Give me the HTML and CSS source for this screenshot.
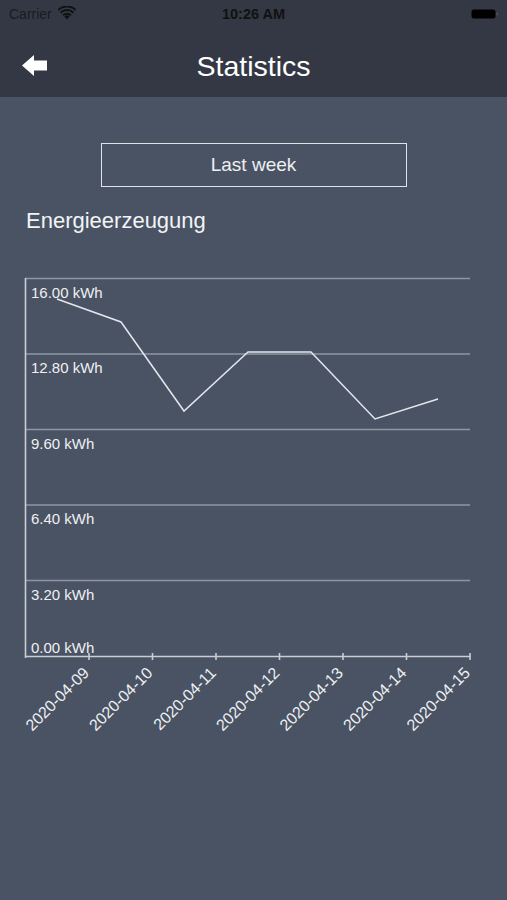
FILE: index.html
```html
<!DOCTYPE html>
<html lang="de">
<head>
<meta charset="utf-8">
<title>Statistics</title>
<link rel="stylesheet" href="styles.css">
</head>
<body>
<header class="top">
  <div class="status">
    <div class="status-left">
      <span class="carrier">Carrier</span>
      <svg class="wifi" width="18" height="14" viewBox="0 0 18 14">
        <path d="M9 13.5 L6.3 10.6 A3.9 3.9 0 0 1 11.7 10.6 Z" fill="#111"/>
        <path d="M4.4 8.6 A6.6 6.6 0 0 1 13.6 8.6 L12.3 10 A4.7 4.7 0 0 0 5.7 10 Z" fill="#111"/>
        <path d="M1.9 6 A10.2 10.2 0 0 1 16.1 6 L14.8 7.4 A8.3 8.3 0 0 0 3.2 7.4 Z" fill="#111"/>
        <path d="M-0.5 3.4 A13.8 13.8 0 0 1 18.5 3.4 L17.2 4.8 A11.9 11.9 0 0 0 0.8 4.8 Z" fill="#111"/>
      </svg>
    </div>
    <div class="time">10:26 AM</div>
    <div class="status-right">
      <svg class="battery" width="28" height="12" viewBox="0 0 28 12">
        <rect x="0.5" y="1.5" width="24" height="9" rx="2.5" fill="#000"/>
        <rect x="25.5" y="4.5" width="1.5" height="3" rx="0.7" fill="#555"/>
      </svg>
    </div>
  </div>
  <nav class="navbar">
    <svg class="back" width="26" height="22" viewBox="0 0 26 22">
      <path d="M0 10.5 L12 0 L12 5.5 L25 5.5 L25 15.5 L12 15.5 L12 21 Z" fill="#fff"/>
    </svg>
    <h1 class="title">Statistics</h1>
  </nav>
</header>
<main class="content">
  <div class="btn-row"><button class="period">Last week</button></div>
  <h2 class="section">Energieerzeugung</h2>
  <svg class="chart" width="507" height="500" viewBox="0 260 507 500">
    <g class="grid">
      <line x1="25" y1="277.5" x2="470" y2="277.5"/>
      <line x1="25" y1="353" x2="470" y2="353"/>
      <line x1="25" y1="428.5" x2="470" y2="428.5"/>
      <line x1="25" y1="504" x2="470" y2="504"/>
      <line x1="25" y1="579.5" x2="470" y2="579.5"/>
    </g>
    <g class="axis">
      <line x1="25.5" y1="277" x2="25.5" y2="657"/>
      <line x1="25" y1="655.5" x2="470.5" y2="655.5"/>
      <line x1="89" y1="652" x2="89" y2="659"/>
      <line x1="152.5" y1="652" x2="152.5" y2="659"/>
      <line x1="216" y1="652" x2="216" y2="659"/>
      <line x1="279.5" y1="652" x2="279.5" y2="659"/>
      <line x1="343" y1="652" x2="343" y2="659"/>
      <line x1="406.5" y1="652" x2="406.5" y2="659"/>
      <line x1="470" y1="652" x2="470" y2="659"/>
    </g>
    <polyline class="data" points="57,298 121,321 184,410 248,351 311,351 375,418 438,398"/>
    <g class="ylabels">
      <text x="31" y="297">16.00 kWh</text>
      <text x="31" y="372">12.80 kWh</text>
      <text x="31" y="448">9.60 kWh</text>
      <text x="31" y="523">6.40 kWh</text>
      <text x="31" y="599">3.20 kWh</text>
      <text x="31" y="652">0.00 kWh</text>
    </g>
    <g class="xlabels">
      <text transform="translate(90 673) rotate(-45)">2020-04-09</text>
      <text transform="translate(153.5 673) rotate(-45)">2020-04-10</text>
      <text transform="translate(217 673) rotate(-45)">2020-04-11</text>
      <text transform="translate(280.5 673) rotate(-45)">2020-04-12</text>
      <text transform="translate(344 673) rotate(-45)">2020-04-13</text>
      <text transform="translate(407.5 673) rotate(-45)">2020-04-14</text>
      <text transform="translate(471 673) rotate(-45)">2020-04-15</text>
    </g>
  </svg>
</main>
</body>
</html>
```
FILE: styles.css
```css
html, body {
  margin: 0;
  padding: 0;
}
body {
  background: #4a5363;
  font-family: "Liberation Sans", Arial, sans-serif;
  color: #f2f4f7;
  width: 507px;
  height: 900px;
  overflow: hidden;
}
.top {
  background: #333844;
  height: 97px;
  display: flex;
  flex-direction: column;
}
.status {
  height: 27px;
  display: flex;
  align-items: center;
  justify-content: space-between;
  padding: 0 8px 0 9px;
  color: #111;
  font-size: 14px;
  position: relative;
}
.status-left {
  display: flex;
  align-items: center;
  gap: 6px;
  width: 120px;
}
.carrier {
  color: #1a1c20;
}
.wifi {
  margin-top: -1px;
}
.time {
  font-weight: bold;
  font-size: 14.5px;
  color: #111;
  position: absolute;
  left: 0;
  right: 0;
  text-align: center;
  pointer-events: none;
}
.status-right {
  width: 120px;
  display: flex;
  justify-content: flex-end;
}
.navbar {
  flex: 1;
  display: flex;
  align-items: center;
  position: relative;
  padding-left: 22px;
  padding-top: 8px;
}
.back {
  display: block;
}
.title {
  position: absolute;
  left: 0;
  right: 0;
  margin: 0;
  text-align: center;
  font-weight: normal;
  font-size: 28.5px;
  color: #fff;
  pointer-events: none;
}
.content {
  padding-top: 46px;
}
.btn-row {
  display: flex;
  justify-content: center;
}
.period {
  width: 306px;
  height: 44px;
  background: transparent;
  border: 1.5px solid #dfe2e7;
  color: #eef0f3;
  font-family: "Liberation Sans", Arial, sans-serif;
  font-size: 19px;
  padding: 0;
}
.section {
  margin: 20px 0 0 26px;
  font-weight: normal;
  font-size: 22px;
  line-height: 28px;
  color: #f2f4f7;
}
.chart {
  display: block;
  margin-top: 26px;
}
.grid line {
  stroke: #8c96a4;
  stroke-width: 1.3;
}
.axis line {
  stroke: #c9ced6;
  stroke-width: 1.6;
}
.data {
  fill: none;
  stroke: #e3e6eb;
  stroke-width: 1.5;
  stroke-linejoin: miter;
}
.ylabels text {
  fill: #eef0f3;
  font-family: "Liberation Sans", Arial, sans-serif;
  font-size: 15px;
}
.xlabels text {
  fill: #eef0f3;
  font-family: "Liberation Sans", Arial, sans-serif;
  font-size: 16px;
  text-anchor: end;
}
```
